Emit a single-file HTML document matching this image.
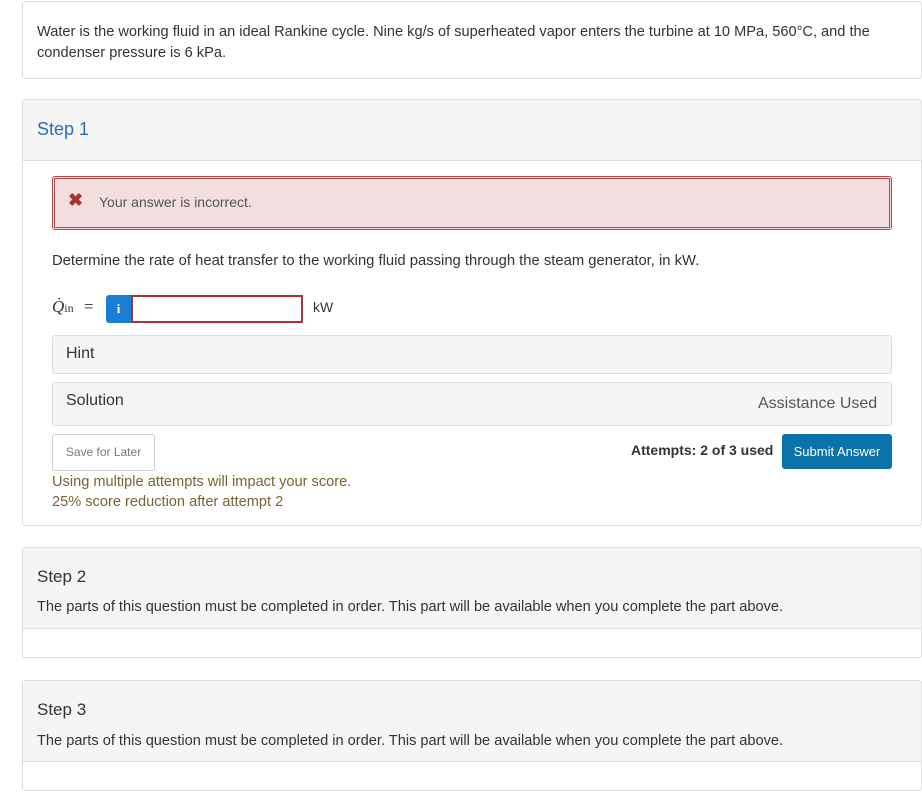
<!DOCTYPE html>
<html><head><style>
body{margin:0;width:922px;height:805px;background:#fff;font-family:"Liberation Sans",sans-serif;color:#333;position:relative;overflow:hidden}
.a{position:absolute}
.box{position:absolute;left:22px;width:898px;border:1px solid #ddd;border-radius:3px;background:#fff}
.t{position:absolute;white-space:nowrap}
</style></head><body>
<div class="box" style="top:1px;height:76px"></div>
<div class="t" style="left:37px;top:22px;font-size:14.6px;line-height:21px">Water is the working fluid in an ideal Rankine cycle. Nine kg/s of superheated vapor enters the turbine at 10 MPa, 560°C, and the<br>condenser pressure is 6 kPa.</div>

<div class="box" style="top:99px;height:425px"></div>
<div class="a" style="left:23px;top:100px;width:898px;height:60px;background:#f5f5f5;border-bottom:1px solid #ddd"></div>
<div class="t" style="left:37px;top:119px;font-size:18px;color:#2a6ebb">Step 1</div>
<div class="a" style="left:52px;top:176px;width:834px;height:48px;background:#f2dede;border:3px double #b04a4a;border-radius:3px"></div>
<div class="t" style="left:68px;top:190px;font-size:18px;font-weight:bold;color:#a33">✖</div>
<div class="t" style="left:99px;top:194px;font-size:14px;color:#555">Your answer is incorrect.</div>
<div class="t" style="left:52px;top:253px;font-size:14.8px">Determine the rate of heat transfer to the working fluid passing through the steam generator, in kW.</div>
<div class="t" style="left:52px;top:297px;font-size:17px;font-family:'Liberation Serif',serif;font-style:italic">Q̇<span style="font-style:normal;font-size:12px">in</span> <span style="font-style:normal;margin-left:6px">=</span></div>
<div class="a" style="left:106px;top:295px;width:25px;height:28px;background:#1a7fd4;border-radius:3px 0 0 3px;color:#fff;font-weight:bold;font-size:13px;text-align:center;line-height:28px;font-family:'Liberation Serif',serif">i</div>
<div class="a" style="left:131px;top:295px;width:168px;height:24px;border:2px double #a33;background:#fff"></div>
<div class="t" style="left:313px;top:299px;font-size:14px">kW</div>
<div class="a" style="left:52px;top:335px;width:838px;height:37px;background:#f5f5f5;border:1px solid #ddd;border-radius:3px"></div>
<div class="t" style="left:66px;top:345px;font-size:16px">Hint</div>
<div class="a" style="left:52px;top:382px;width:838px;height:42px;background:#f5f5f5;border:1px solid #ddd;border-radius:3px"></div>
<div class="t" style="left:66px;top:392px;font-size:16px">Solution</div>
<div class="t" style="left:758px;top:395px;font-size:16px;color:#555">Assistance Used</div>
<div class="a" style="left:52px;top:434px;width:101px;height:35px;border:1px solid #ccc;border-radius:3px;font-size:12px;color:#777;line-height:35px;text-align:center">Save for Later</div>
<div class="t" style="left:631px;top:442px;font-size:14px;font-weight:bold;color:#333">Attempts: 2 of 3 used</div>
<div class="a" style="left:782px;top:434px;width:110px;height:35px;background:#0a72a8;border-radius:3px;font-size:13px;color:#fff;line-height:35px;text-align:center">Submit Answer</div>
<div class="t" style="left:52px;top:472px;font-size:14.6px;line-height:20px;color:#7b6233">Using multiple attempts will impact your score.<br>25% score reduction after attempt 2</div>

<div class="box" style="top:547px;height:109px"></div>
<div class="a" style="left:23px;top:548px;width:898px;height:80px;background:#f5f5f5;border-bottom:1px solid #ddd"></div>
<div class="t" style="left:37px;top:567px;font-size:17px">Step 2</div>
<div class="t" style="left:37px;top:599px;font-size:14.6px">The parts of this question must be completed in order. This part will be available when you complete the part above.</div>

<div class="box" style="top:680px;height:109px"></div>
<div class="a" style="left:23px;top:681px;width:898px;height:80px;background:#f5f5f5;border-bottom:1px solid #ddd"></div>
<div class="t" style="left:37px;top:700px;font-size:17px">Step 3</div>
<div class="t" style="left:37px;top:733px;font-size:14.6px">The parts of this question must be completed in order. This part will be available when you complete the part above.</div>
</body></html>
